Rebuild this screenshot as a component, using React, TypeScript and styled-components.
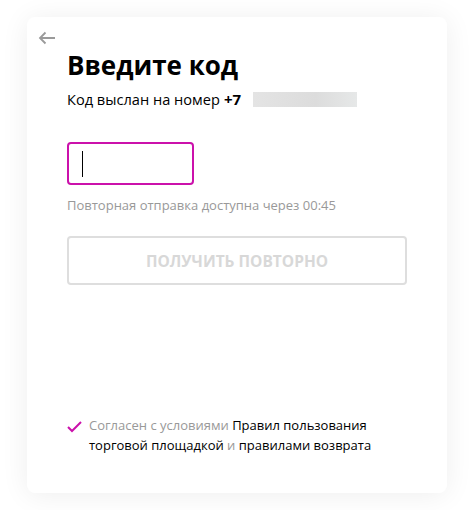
import React from "react";
import styled, { createGlobalStyle } from "styled-components";

const GlobalStyle = createGlobalStyle`
	body {
		margin: 0;
		background: #ffffff;
		font-family: "Open Sans", "Noto Sans", Arial, sans-serif;
		color: #000;
	}
`;

const Page = styled.div`
	width: 470px;
	height: 510px;
	box-sizing: border-box;
	padding: 17px 23px 17px 27px;
`;

const Card = styled.div`
	width: 420px;
	height: 476px;
	box-sizing: border-box;
	background: #fff;
	border-radius: 8px;
	box-shadow: 0 2px 28px rgba(0, 0, 0, 0.07);
	padding: 12px 40px 0 10px;
	display: flex;
	flex-direction: column;
`;

const BackButton = styled.button`
	width: 20px;
	height: 18px;
	padding: 0;
	border: none;
	background: none;
	cursor: pointer;
	display: flex;
	align-items: center;
	justify-content: center;
`;

const Body = styled.div`
	padding-left: 30px;
	display: flex;
	flex-direction: column;
	flex: 1;
`;

const Title = styled.h1`
	margin: 0;
	font-size: 26px;
	line-height: 36px;
	font-weight: 700;
`;

const Sent = styled.p`
	margin: 6px 0 0;
	font-size: 14.6px;
	line-height: 20px;
	display: flex;
	align-items: center;
	gap: 4px;
`;

const Phone = styled.b`
	font-weight: 700;
	font-size: 15px;
`;

const Hidden = styled.span`
	display: inline-block;
	width: 104px;
	height: 15px;
	margin-left: 8px;
	background: linear-gradient(90deg, #e4e4e4, #dcdcdc 60%, #e6e8e8);
	filter: blur(0.5px);
`;

const CodeInput = styled.div`
	margin-top: 33px;
	width: 127px;
	height: 43px;
	box-sizing: border-box;
	border: 2px solid #cb11ab;
	border-radius: 4px;
	display: flex;
	align-items: center;
	padding-left: 13px;
`;

const Caret = styled.span`
	width: 1px;
	height: 26px;
	background: #000;
`;

const Hint = styled.p`
	margin: 11px 0 0;
	font-size: 13px;
	line-height: 18px;
	color: #999;
`;

const ResendButton = styled.button`
	margin-top: 22px;
	width: 340px;
	height: 49px;
	border: 2px solid #dedede;
	border-radius: 4px;
	background: #fff;
	color: #d8d8d8;
	font-family: inherit;
	font-size: 15.5px;
	font-weight: 700;
	text-transform: uppercase;
`;

const Agreement = styled.div`
	margin-top: auto;
	margin-bottom: 38px;
	display: flex;
	gap: 7px;
	font-size: 13px;
	line-height: 20px;
	color: #999;
`;

const Check = styled.span`
	flex: none;
	padding-top: 3px;
`;

const Link = styled.a`
	color: #000;
	text-decoration: none;
`;

export default function App() {
	return (
		<Page>
			<GlobalStyle />
			<Card>
				<BackButton aria-label="Назад">
					<svg width="18" height="14" viewBox="0 0 18 14" fill="none">
						<path d="M17 7H2M7.5 1.5L2 7l5.5 5.5" stroke="#9a9a9a" strokeWidth="1.8" />
					</svg>
				</BackButton>
				<Body>
					<Title>Введите код</Title>
					<Sent>
						Код выслан на номер <Phone>+7</Phone>
						<Hidden />
					</Sent>
					<CodeInput>
						<Caret />
					</CodeInput>
					<Hint>Повторная отправка доступна через 00:45</Hint>
					<ResendButton disabled>Получить повторно</ResendButton>
					<Agreement>
						<Check>
							<svg width="15" height="12" viewBox="0 0 15 12" fill="none">
								<path d="M1 6l4 4L14 1" stroke="#cb11ab" strokeWidth="2" />
							</svg>
						</Check>
						<span>
							Согласен с условиями <Link href="#">Правил пользования торговой площадкой</Link> и{" "}
							<Link href="#">правилами возврата</Link>
						</span>
					</Agreement>
				</Body>
			</Card>
		</Page>
	);
}
